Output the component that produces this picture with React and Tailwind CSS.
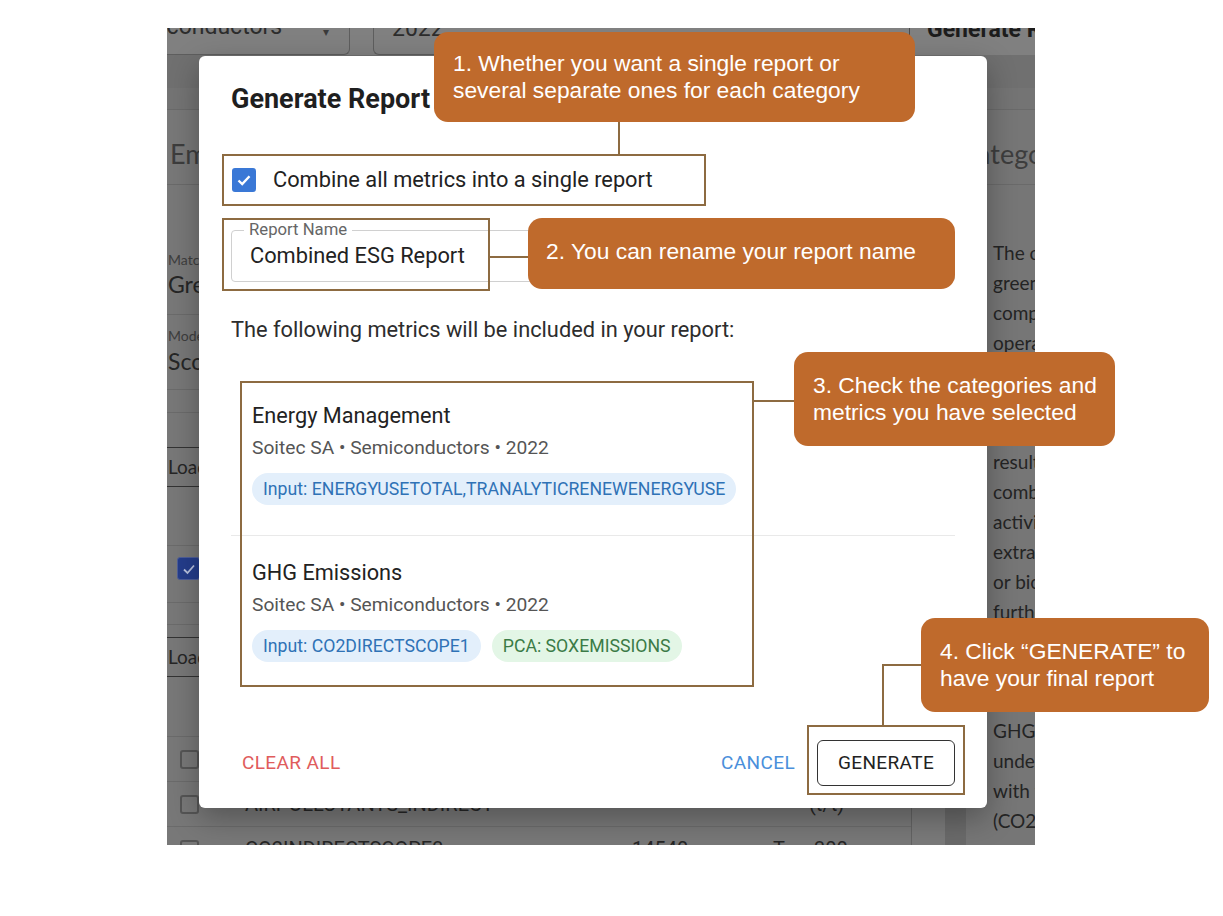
import React from 'react';

const Callout = ({ className, children }) => (
  <div
    className={`absolute rounded-[14px] bg-[#bf6a2c] text-white flex items-center font-['Liberation_Sans',Arial,sans-serif] text-[22.8px] leading-[27px] ${className}`}
  >
    {children}
  </div>
);

const Frame = ({ className }) => (
  <div className={`absolute border-2 border-[#8d6b41] ${className}`} />
);

const Line = ({ className }) => <div className={`absolute bg-[#8d6b41] ${className}`} />;

const Chip = ({ tone, children }) => (
  <span
    className={
      tone === 'green'
        ? 'h-[32px] px-[11px] rounded-full bg-[#e3f6e6] text-[#3b7b47] text-[17.7px] flex items-center'
        : 'h-[32px] px-[11px] rounded-full bg-[#e3effb] text-[#2f72b6] text-[17.7px] flex items-center'
    }
  >
    {children}
  </span>
);

const metrics = [
  {
    title: 'Energy Management',
    chips: [{ tone: 'blue', label: 'Input: ENERGYUSETOTAL,TRANALYTICRENEWENERGYUSE' }],
  },
  {
    title: 'GHG Emissions',
    chips: [
      { tone: 'blue', label: 'Input: CO2DIRECTSCOPE1' },
      { tone: 'green', label: 'PCA: SOXEMISSIONS' },
    ],
  },
];

const panelLines = [
  'The carbon emissions category',
  'greenhouse gas emissions of the',
  'company from its direct',
  'operations and energy use',
  'in the reporting period',
  'including the emissions',
  'of scope 1 and scope 2',
  'resulting from fuel use',
  'combustion and process',
  'activities such as the',
  'extraction of materials',
  'or biological processes',
  'further divided into',
  'categories which',
  'are measured in',
  'tonnes of CO2e',
  'GHG emissions',
  'under scope 1',
  'with the totals',
  '(CO2 equivalents)',
];

const tableRows = [
  { name: 'AIRPOLLUTANTS_DIRECT', value: '', unit: '', score: '' },
  { name: 'AIRPOLLUTANTS_INDIRECT', value: '', unit: '', score: '(t/t)' },
  { name: 'CO2INDIRECTSCOPE3', value: '14540', unit: 'T', score: ' 300' },
];

// dimmed app that sits behind the dialog
const BackgroundApp = () => (
  <div className="w-full h-full flex flex-col font-['Lato','Open_Sans',sans-serif] text-[#2c2c2c]">
    {/* filter bar */}
    <div className="h-[27px] shrink-0 flex bg-[#808080] overflow-hidden">
      <div className="w-[183px] shrink-0 h-[30px] -mt-[3px] border-r border-b border-[#5e5e5e] rounded-br-[6px] flex items-start justify-between pr-[20px]">
        <span className="-mt-[12px] -ml-[6px] text-[23px] leading-[28px] font-['Roboto',sans-serif] whitespace-nowrap">iconductors</span>
        <span className="text-[12px] leading-[12px] text-[#3a3a3a] mt-[1px]">▾</span>
      </div>
      <div className="ml-[23px] shrink-0 w-[520px] h-[30px] -mt-[3px] border-l border-b border-[#5e5e5e] rounded-bl-[6px] pl-[18px]">
        <span className="block -mt-[10px] text-[23px] leading-[28px] font-['Roboto',sans-serif]">2022</span>
      </div>
      <div className="ml-[16px] shrink-0 w-px h-[20px] bg-[#4a4a4a]" />
      <span className="ml-[17px] shrink-0 -mt-[12px] text-[23px] leading-[28px] font-bold text-[#1c1c1c] font-['Roboto',sans-serif] whitespace-nowrap">Generate Report</span>
    </div>
    <div className="h-[33px] shrink-0 bg-[#707070]" />
    <div className="h-[22px] shrink-0 bg-[#747474] border-b border-[#6a6a6a]" />

    <div className="flex flex-1 min-h-0">
      {/* left card */}
      <div className="w-[744px] shrink-0 flex flex-col bg-[#787878]">
        <div className="h-[75px] shrink-0 flex items-center border-b border-[#6a6a6a] pl-[3px] pt-[14px] text-[27px] text-[#3d3d3d] whitespace-nowrap">
          Emissions Scoring
        </div>
        <div className="h-[62px] shrink-0" />
        <div className="h-[68px] shrink-0 border-b border-[#6b6b6b] pl-[1px] flex flex-col pt-[4px]">
          <span className="text-[14px] leading-[18px] text-[#3e3e3e]">Matching model</span>
          <span className="text-[23px] leading-[30px] text-[#262626]">Greenhouse gas</span>
        </div>
        <div className="h-[75px] shrink-0 border-b border-[#6b6b6b] pl-[1px] pt-[12px] flex flex-col">
          <span className="text-[14px] leading-[18px] text-[#3e3e3e]">Model</span>
          <span className="text-[23px] leading-[32px] text-[#262626]">Scoring v2</span>
        </div>
        <div className="h-[23px] shrink-0 border-b border-[#6b6b6b]" />
        <div className="h-[34px] shrink-0" />
        <div className="h-[40px] shrink-0 border-y border-[#333] flex items-center pl-[1px] text-[19px] text-[#262626] whitespace-nowrap">
          Load metrics
        </div>
        <div className="h-[59px] shrink-0 border-b border-[#6b6b6b]" />
        <div className="h-[56px] shrink-0 flex items-start pt-[11px] pl-[10px]">
          <span className="w-[23px] h-[23px] rounded-[3px] bg-[#243d8c] border border-[#4e5e9a] flex items-center justify-center">
            <svg width="16" height="16" viewBox="0 0 16 16">
              <path d="M3 8.5 L6.5 12 L13 4.5" fill="none" stroke="#b9c3e0" strokeWidth="1.8" />
            </svg>
          </span>
        </div>
        <div className="h-[23px] shrink-0 border-y border-[#6b6b6b]" />
        <div className="h-[12px] shrink-0" />
        <div className="h-[40px] shrink-0 border-y border-[#333] flex items-center pl-[1px] text-[19px] text-[#262626] whitespace-nowrap">
          Load metrics
        </div>
        <div className="h-[60px] shrink-0 border-b border-[#6b6b6b]" />
        {tableRows.map((row) => (
          <div key={row.name} className="h-[45px] shrink-0 flex items-center border-b border-[#6b6b6b] text-[20px] text-[#262626] font-['Roboto',sans-serif] whitespace-nowrap">
            <span className="ml-[13px] shrink-0 w-[19px] h-[19px] rounded-[3px] border-2 border-[#555]" />
            <span className="ml-[46px] w-[387px] shrink-0">{row.name}</span>
            <span className="w-[141px] shrink-0">{row.value}</span>
            <span className="w-[36px] shrink-0">{row.unit}</span>
            <span className="whitespace-pre">{row.score}</span>
          </div>
        ))}
      </div>
      <div className="w-px shrink-0 bg-[#636363]" />
      <div className="w-[33px] shrink-0 bg-[#7a7a7a]" />
      <div className="w-[21px] shrink-0 bg-[#6a6a6a]" />
      {/* right card */}
      <div className="flex-1 min-w-0 flex flex-col bg-[#767676] overflow-hidden">
        <div className="h-[75px] shrink-0 flex items-center border-b border-[#6a6a6a] pt-[14px] text-[27px] text-[#3d3d3d] whitespace-nowrap">
          <span className="-ml-[7px]">Category</span>
        </div>
        <div className="pt-[53px] pl-[27px] flex flex-col">
          {panelLines.map((l) => (
            <div key={l} className="h-[29.9px] text-[19px] leading-[29.9px] text-[#242424] whitespace-nowrap">
              {l}
            </div>
          ))}
        </div>
      </div>
    </div>
  </div>
);

const Dialog = () => (
  <div className="absolute left-[32px] top-[28px] w-[788px] h-[752px] bg-white rounded-[6px] shadow-[0_10px_30px_rgba(0,0,0,0.3)] flex flex-col px-[32px] pt-[27px] pb-[22px] font-['Roboto',sans-serif]">
    <h2 className="text-[27px] leading-[32px] font-bold text-[#1f1f1f]">Generate Report</h2>

    <label className="mt-[45px] h-[40px] flex items-center">
      <span className="ml-[1px] w-[24px] h-[24px] rounded-[3px] bg-[#3a78d6] flex items-center justify-center">
        <svg width="18" height="18" viewBox="0 0 18 18">
          <path d="M3.5 9.5 L7.2 13 L14.5 5.2" fill="none" stroke="white" strokeWidth="2.4" />
        </svg>
      </span>
      <span className="ml-[17px] text-[21.8px] text-[#222]">Combine all metrics into a single report</span>
    </label>

    <div className="mt-[30px] relative h-[52px] border border-[#d0d0d0] rounded-[4px] flex items-center pl-[18px]">
      <span className="absolute left-[12px] -top-[11px] px-[5px] bg-white text-[16.7px] leading-[20px] text-[#666]">
        Report Name
      </span>
      <span className="text-[21.8px] text-[#222]">Combined ESG Report</span>
    </div>

    <p className="mt-[34px] text-[21.8px] leading-[28px] text-[#2d2d2d]">
      The following metrics will be included in your report:
    </p>

    <div className="mt-[35px]">
      {metrics.map((m, i) => (
        <div
          key={m.title}
          className={i === 0 ? 'px-[21px] pt-[23px] pb-[30px] border-b border-[#e9e9e9]' : 'px-[21px] pt-[23px]'}
        >
          <div className="text-[21.7px] leading-[28px] text-[#222]">{m.title}</div>
          <div className="mt-[6px] text-[19.2px] leading-[24px] text-[#555]">Soitec SA • Semiconductors • 2022</div>
          <div className="mt-[13px] flex gap-[11px]">
            {m.chips.map((c) => (
              <Chip key={c.label} tone={c.tone}>
                {c.label}
              </Chip>
            ))}
          </div>
        </div>
      ))}
    </div>

    <div className="mt-auto flex items-center">
      <button className="ml-[11px] text-[19px] tracking-[0.02em] text-[#e05c5c]">CLEAR ALL</button>
      <button className="ml-auto text-[19px] tracking-[0.02em] text-[#4a8fdb]">CANCEL</button>
      <button className="ml-[22px] w-[138px] h-[46px] border border-[#333] rounded-[6px] text-[19px] tracking-[0.02em] text-[#222]">
        GENERATE
      </button>
    </div>
  </div>
);

export default function App() {
  return (
    <div className="relative w-[1223px] h-[916px] bg-white overflow-hidden">
      <div className="pl-[167px] pt-[28px]">
        <div className="relative w-[868px] h-[817px] overflow-hidden bg-[#767676]">
          <BackgroundApp />
          <Dialog />
        </div>
      </div>

      {/* annotation frames */}
      <Frame className="left-[222px] top-[154px] w-[484px] h-[52px]" />
      <Frame className="left-[222px] top-[218px] w-[268px] h-[73px]" />
      <Frame className="left-[240px] top-[381px] w-[514px] h-[306px]" />
      <Frame className="left-[807px] top-[725px] w-[158px] h-[70px]" />

      {/* connectors */}
      <Line className="left-[618px] top-[122px] w-[2px] h-[32px]" />
      <Line className="left-[490px] top-[256px] w-[38px] h-[2px]" />
      <Line className="left-[754px] top-[400px] w-[40px] h-[2px]" />
      <Line className="left-[882px] top-[664px] w-[2px] h-[61px]" />
      <Line className="left-[882px] top-[664px] w-[39px] h-[2px]" />

      {/* callouts */}
      <Callout className="left-[434px] top-[32px] w-[481px] h-[90px] pl-[19px]">
        <span>
          1. Whether you want a single report or
          <br />
          several separate ones for each category
        </span>
      </Callout>
      <Callout className="left-[528px] top-[218px] w-[427px] h-[71px] pl-[18px] pb-[4px]">
        <span>2. You can rename your report name</span>
      </Callout>
      <Callout className="left-[794px] top-[352px] w-[321px] h-[94px] pl-[19px]">
        <span>
          3. Check the categories and
          <br />
          metrics you have selected
        </span>
      </Callout>
      <Callout className="left-[921px] top-[618px] w-[288px] h-[94px] pl-[19px]">
        <span>
          4. Click “GENERATE” to
          <br />
          have your final report
        </span>
      </Callout>
    </div>
  );
}
